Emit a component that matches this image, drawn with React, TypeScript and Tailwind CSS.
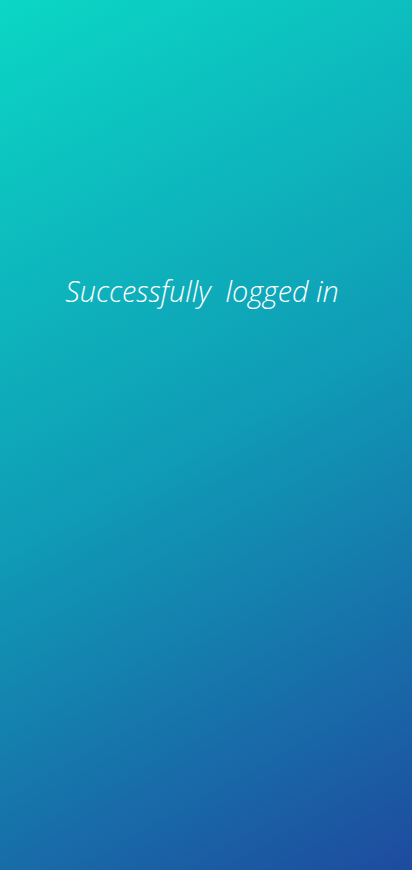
export default function App() {
  return (
    <div className="flex h-[870px] w-full flex-col items-center bg-[linear-gradient(151deg,#0bd7c5_0%,#0f9cb6_50%,#1e4b9f_100%)]">
      <p className="mr-[8px] mt-[271px] whitespace-pre text-[28.8px] font-light italic leading-[40px] text-white [font-family:'Open_Sans',sans-serif]">
        {"Successfully  logged in"}
      </p>
    </div>
  );
}
